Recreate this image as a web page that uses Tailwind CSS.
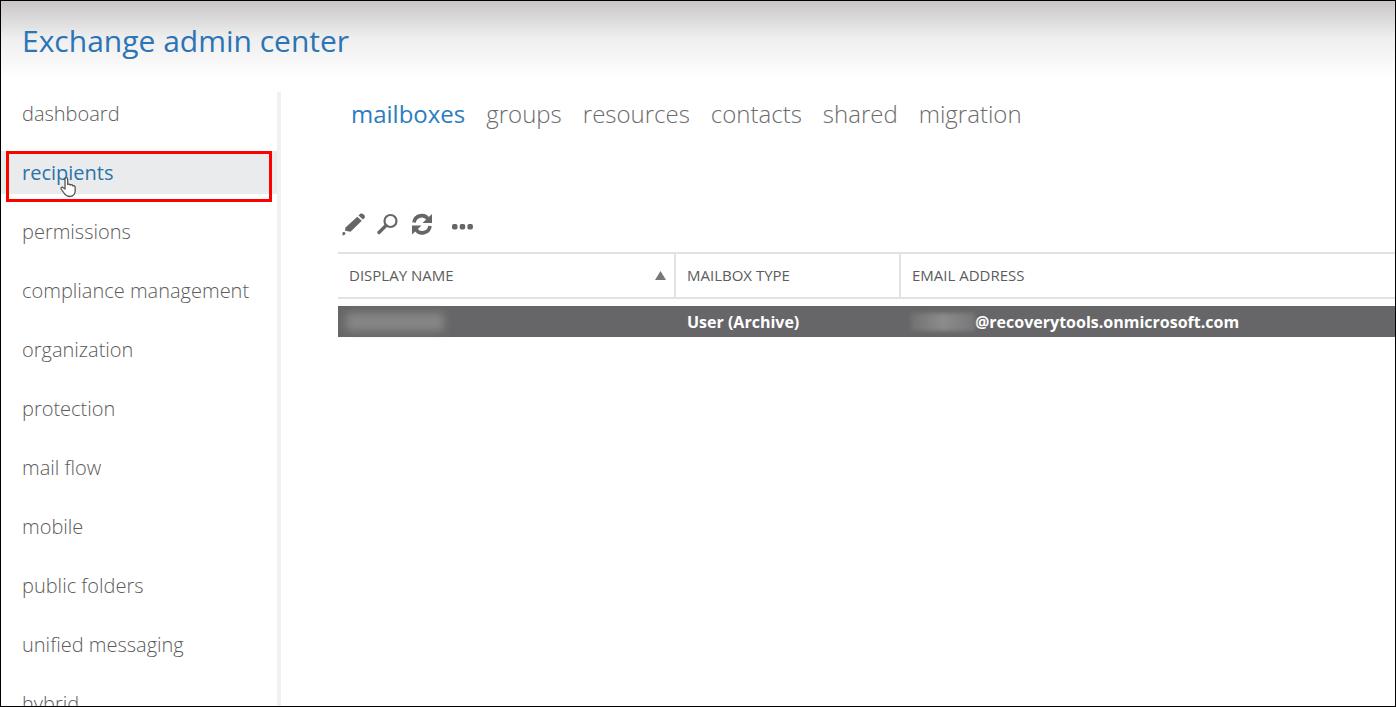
<!DOCTYPE html>
<html lang="en">
<head>
    <meta charset="UTF-8">
    <meta name="viewport" content="width=device-width, initial-scale=1.0">
    <title>Exchange admin center</title>
    <script src="https://cdn.jsdelivr.net/npm/@tailwindcss/browser@4"></script>
</head>
<body class="h-screen overflow-hidden flex flex-col border border-black bg-white font-['Open_Sans','Noto_Sans',sans-serif] text-[#5c5c5c]">
    <header class="shrink-0 h-[91px] pt-5 pl-[21px] bg-linear-to-b from-[#c9c6c8] via-[#eeeeee] via-40% to-white to-85%">
        <h1 class="text-[30px] leading-10 text-[#2b74b5]">Exchange admin center</h1>
    </header>
    <div class="flex flex-1 min-h-0">
        <nav class="relative w-[280px] shrink-0 flex flex-col gap-4 border-r-4 border-[#f1f1f3] text-xl font-light">
            <a href="#" class="shrink-0 h-[43px] leading-[43px] pl-[21px]">dashboard</a>
            <a href="#" class="shrink-0 h-[43px] leading-[43px] pl-[21px] bg-[#eaebed] font-normal text-[#2b74a9]" aria-current="page">recipients</a>
            <a href="#" class="shrink-0 h-[43px] leading-[43px] pl-[21px]">permissions</a>
            <a href="#" class="shrink-0 h-[43px] leading-[43px] pl-[21px]">compliance management</a>
            <a href="#" class="shrink-0 h-[43px] leading-[43px] pl-[21px]">organization</a>
            <a href="#" class="shrink-0 h-[43px] leading-[43px] pl-[21px]">protection</a>
            <a href="#" class="shrink-0 h-[43px] leading-[43px] pl-[21px]">mail flow</a>
            <a href="#" class="shrink-0 h-[43px] leading-[43px] pl-[21px]">mobile</a>
            <a href="#" class="shrink-0 h-[43px] leading-[43px] pl-[21px]">public folders</a>
            <a href="#" class="shrink-0 h-[43px] leading-[43px] pl-[21px]">unified messaging</a>
            <a href="#" class="shrink-0 h-[43px] leading-[43px] pl-[21px]">hybrid</a>

            <!-- highlight box and pointer over the selected item -->
            <div class="absolute left-[5px] top-[59px] w-[266px] h-[51px] border-3 border-[#fe0000] pointer-events-none"></div>
            <svg class="absolute left-[58px] top-[84px] w-[18px] h-[22px] pointer-events-none" viewBox="0 0 18 22" fill="white" stroke="#555" stroke-width="1.3" stroke-linejoin="round">
                <path d="M6 13V3.200C6 1.200 8.700 1.200 8.700 3.200V8.500C9.500 7.800 11 8 11.200 9C12.200 8.300 13.500 8.700 13.700 9.800C15 9.300 16.200 10 16.200 11.500V14.500C16.200 18.500 14 20.500 10.500 20.500C7.500 20.500 6.300 19 5 17L2.200 13C1.500 11.500 3.300 10.600 4.300 11.700Z"/>
            </svg>
        </nav>

        <main class="flex-1 min-w-0 pl-[57px]">
            <nav class="flex gap-[21px] pl-[13px] text-2xl leading-[44px] font-light text-[#6c6c6c]">
                <a href="#" class="font-normal text-[#2b7dc0]" aria-current="page">mailboxes</a>
                <a href="#">groups</a>
                <a href="#">resources</a>
                <a href="#">contacts</a>
                <a href="#">shared</a>
                <a href="#">migration</a>
            </nav>

            <div class="flex items-center gap-2.5 mt-[66px] h-[50px] pb-1.5 pl-1">
                <button type="button" aria-label="Edit" class="size-6">
                    <svg class="size-6" viewBox="0 0 24 24" fill="#666">
                        <path d="M16.500 3.500L18 2C20 .2 24.300 3.800 22.500 6L21 7.500Z"/>
                        <path d="M15.300 4.700L19.800 8.800L8.500 19.800L3 18.700L3.500 15.500Z"/>
                        <path d="M.5 20.500L2.200 19.700L3.600 21.200L2.500 23L.5 23.500Z"/>
                    </svg>
                </button>
                <button type="button" aria-label="Search" class="size-6">
                    <svg class="size-6" viewBox="0 0 24 24" fill="none" stroke="#666">
                        <circle cx="14.500" cy="9" r="6" stroke-width="2.200"/>
                        <path d="M10 13.500L3 20.500" stroke-width="3.400" stroke-linecap="round"/>
                    </svg>
                </button>
                <button type="button" aria-label="Refresh" class="size-6">
                    <svg class="size-6" viewBox="0 0 24 24">
                        <path d="M4 10.500C5 3 14.500 1.500 18 7M20 14C19 21.500 9.500 23 6 17.500" fill="none" stroke="#666" stroke-width="3.600"/>
                        <path d="M22 2V11H12.500ZM2 22.500V13.500H11.500Z" fill="#666"/>
                    </svg>
                </button>
                <button type="button" aria-label="More" class="size-6 ml-1.5">
                    <svg class="size-6" viewBox="0 0 24 24" fill="#666">
                        <rect x="2" y="12" width="5.500" height="5.500" rx="1.800"/>
                        <rect x="9.700" y="12" width="5.500" height="5.500" rx="1.800"/>
                        <rect x="17.400" y="12" width="5.500" height="5.500" rx="1.800"/>
                    </svg>
                </button>
            </div>

            <table class="w-full table-fixed border-collapse text-base">
                <colgroup>
                    <col class="w-[337px]">
                    <col class="w-[225px]">
                    <col>
                </colgroup>
                <thead>
                    <tr class="h-[45px] border-y-2 border-[#e2e2e2] text-left text-[15px] text-[#5c5c5c]">
                        <th scope="col" class="pl-[11px] pr-2 font-normal border-r-2 border-[#e2e2e2]">
                            <div class="flex items-center justify-between">
                                DISPLAY NAME
                                <svg class="w-[11px] h-[9px]" viewBox="0 0 11 9" fill="#777"><path d="M5.500 0L11 9H0Z"/></svg>
                            </div>
                        </th>
                        <th scope="col" class="pl-[11px] font-normal border-r-2 border-[#e2e2e2]">MAILBOX TYPE</th>
                        <th scope="col" class="pl-[11px] font-normal">EMAIL ADDRESS</th>
                    </tr>
                </thead>
                <tbody>
                    <tr class="h-2"><td colspan="3"></td></tr>
                    <tr class="h-[31px] bg-[#666668] text-white font-bold">
                        <td class="pl-2"><div class="w-[98px] h-[18px] bg-[#868686] blur-xs"></div></td>
                        <td class="pl-3">User (Archive)</td>
                        <td class="pl-[11px]">
                            <div class="flex items-center">
                                <span class="w-16 h-[18px] bg-linear-to-r from-[#727272] via-[#8c8c8c] to-[#777] blur-[2px]"></span>
                                <span>@recoverytools.onmicrosoft.com</span>
                            </div>
                        </td>
                    </tr>
                </tbody>
            </table>
        </main>
    </div>
</body>
</html>
